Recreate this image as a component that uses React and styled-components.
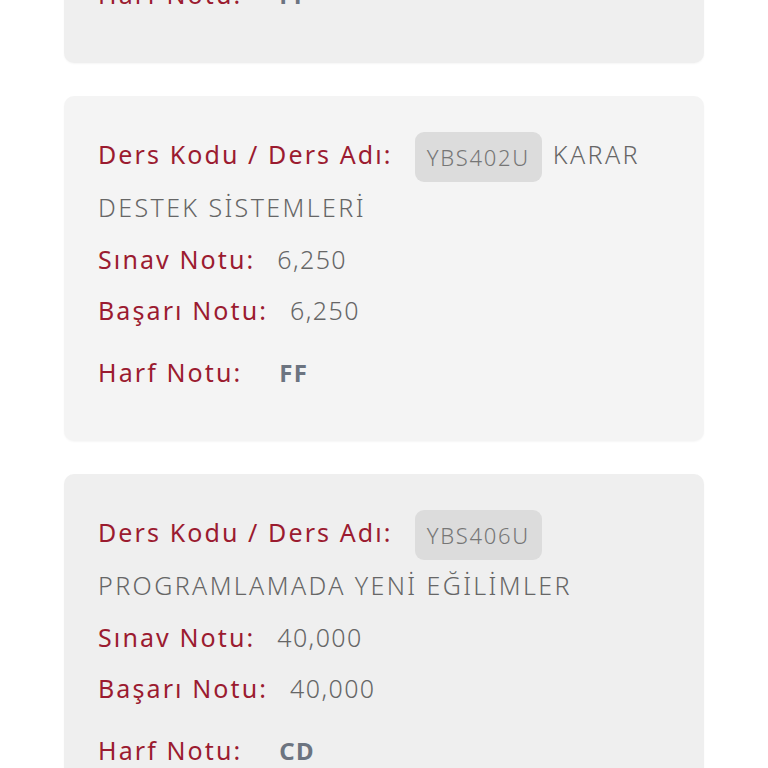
import React from 'react'
import styled, { createGlobalStyle } from 'styled-components'

const GlobalStyle = createGlobalStyle`
  html, body {
    margin: 0;
    padding: 0;
    background: #fff;
    overflow: hidden;
  }
  body {
    font-family: 'Noto Sans', 'Liberation Sans', sans-serif;
  }
`

const Page = styled.main`
  width: 768px;
  height: 768px;
  overflow: hidden;
`

// the list is scrolled: first card is mostly above the top edge
const List = styled.section`
  display: flex;
  flex-direction: column;
  gap: 33px;
  padding: 0 64px;
  margin-top: -282px;
`

const Card = styled.article`
  background: ${(p) => (p.light ? '#f4f4f4' : '#efefef')};
  border-radius: 10px;
  padding: 33px 34px 40px;
  box-shadow: 0 1px 2px rgba(0, 0, 0, 0.04);
  height: 345px;
  box-sizing: border-box;
`

const Line = styled.div`
  font-size: 25px;
  font-weight: 300;
  letter-spacing: 1.4px;
  line-height: 51.5px;
  color: #666;
  margin-top: ${(p) => (p.spaced ? '10px' : '0')};
`

const Label = styled.span`
  color: #9b1b30;
  font-weight: 400;
  letter-spacing: 2.1px;
  margin-right: ${(p) => p.gap || 22}px;
`

const Code = styled.span`
  display: inline-block;
  background: #dcdcdc;
  color: #767676;
  border-radius: 9px;
  font-size: 22px;
  letter-spacing: 1.7px;
  line-height: 30px;
  padding: 10px 12px;
  margin-right: 11px;
  vertical-align: middle;
`

const CourseName = styled.span`
  letter-spacing: 2.4px;
`

const Letter = styled.span`
  font-weight: 700;
  color: #6c7480;
  font-size: 24px;
`

const grades = [
  { code: 'YBS404U', name: 'KARAR DESTEK SİSTEMLERİ', exam: '6,250', total: '6,250', letter: 'FF' },
  { code: 'YBS402U', name: 'KARAR DESTEK SİSTEMLERİ', exam: '6,250', total: '6,250', letter: 'FF' },
  { code: 'YBS406U', name: 'PROGRAMLAMADA YENİ EĞİLİMLER', exam: '40,000', total: '40,000', letter: 'CD', wrap: true },
]

export default function App() {
  return (
    <Page>
      <GlobalStyle />
      <List>
        {grades.map((g, i) => (
          <Card key={i} light={i % 2 === 1}>
            <Line>
              <Label>Ders Kodu / Ders Adı:</Label>
              <Code>{g.code}</Code>
              {g.wrap && <br />}
              <CourseName>{g.name}</CourseName>
            </Line>
            <Line>
              <Label>Sınav Notu:</Label>
              {g.exam}
            </Line>
            <Line>
              <Label>Başarı Notu:</Label>
              {g.total}
            </Line>
            <Line spaced>
              <Label gap={37}>Harf Notu:</Label>
              <Letter>{g.letter}</Letter>
            </Line>
          </Card>
        ))}
      </List>
    </Page>
  )
}
